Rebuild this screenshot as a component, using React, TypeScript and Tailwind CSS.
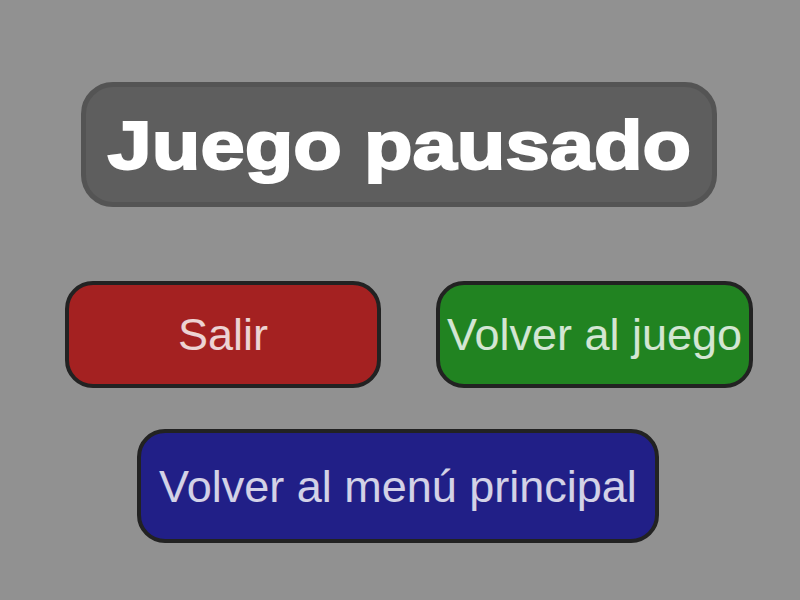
import React from 'react';

interface MenuButtonProps {
  readonly label: string;
  readonly className: string;
}

function MenuButton({ label, className }: MenuButtonProps): React.JSX.Element {
  return (
    <button
      className={`flex items-center justify-center rounded-[28px] border-4 border-[#222222] text-[45px] leading-none text-white/80 ${className}`}
    >
      {label}
    </button>
  );
}

export default function App(): React.JSX.Element {
  return (
    <div className="flex h-[600px] w-[800px] flex-col bg-[#919191] pt-[82px] font-['Liberation_Sans',Arial,sans-serif]">
      <div className="ml-[81px] flex h-[125px] w-[636px] items-center justify-center rounded-[32px] border-[5px] border-[#545454] bg-[#5e5e5e]">
        <h1 className="scale-x-[1.17] text-[68px] font-bold leading-none text-white [-webkit-text-stroke:2px_white]">
          Juego pausado
        </h1>
      </div>
      <div className="mt-[74px] ml-[65px] flex gap-[55px]">
        <MenuButton label="Salir" className="h-[107px] w-[316px] bg-[#a42121]" />
        <MenuButton label="Volver al juego" className="h-[107px] w-[317px] bg-[#218321]" />
      </div>
      <MenuButton label="Volver al menú principal" className="mt-[41px] ml-[137px] h-[114px] w-[522px] bg-[#211f87]" />
    </div>
  );
}
